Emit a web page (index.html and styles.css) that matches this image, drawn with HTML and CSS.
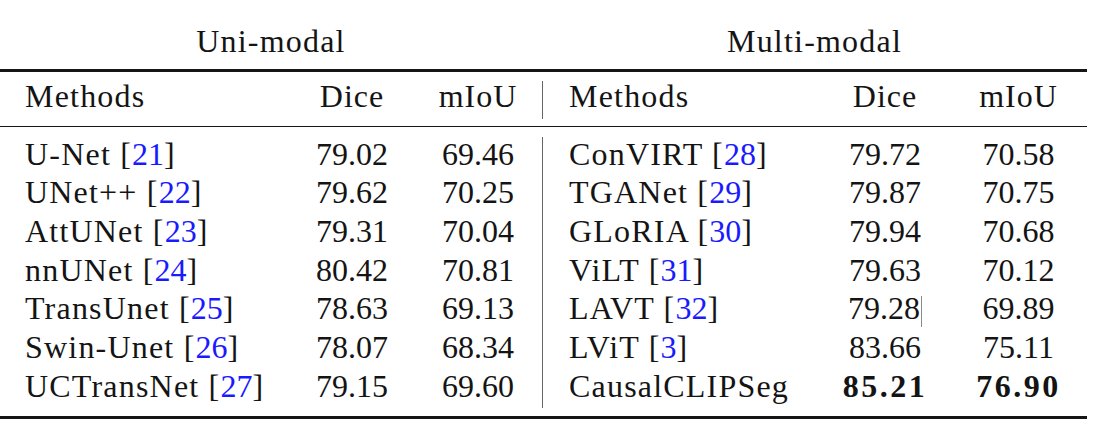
FILE: index.html
```html
<!DOCTYPE html>
<html lang="en">
<head>
<meta charset="utf-8">
<title>Comparison table</title>
<link rel="stylesheet" href="styles.css">
</head>
<body>
<div class="table">
  <div class="groups">
    <div class="group">Uni-modal</div>
    <div class="group">Multi-modal</div>
  </div>
  <div class="rule rule-top"></div>
  <div class="row head">
    <div class="name">Methods</div>
    <div class="num">Dice</div>
    <div class="num">mIoU</div>
    <div class="name sep">Methods</div>
    <div class="num">Dice</div>
    <div class="num">mIoU</div>
  </div>
  <div class="rule rule-mid"></div>
  <div class="body">
    <div class="row">
      <div class="name">U-Net [<span class="cite">21</span>]</div>
      <div class="num">79.02</div>
      <div class="num">69.46</div>
      <div class="name sep">ConVIRT [<span class="cite">28</span>]</div>
      <div class="num">79.72</div>
      <div class="num">70.58</div>
    </div>
    <div class="row">
      <div class="name">UNet++ [<span class="cite">22</span>]</div>
      <div class="num">79.62</div>
      <div class="num">70.25</div>
      <div class="name sep">TGANet [<span class="cite">29</span>]</div>
      <div class="num">79.87</div>
      <div class="num">70.75</div>
    </div>
    <div class="row">
      <div class="name">AttUNet [<span class="cite">23</span>]</div>
      <div class="num">79.31</div>
      <div class="num">70.04</div>
      <div class="name sep">GLoRIA [<span class="cite">30</span>]</div>
      <div class="num">79.94</div>
      <div class="num">70.68</div>
    </div>
    <div class="row">
      <div class="name">nnUNet [<span class="cite">24</span>]</div>
      <div class="num">80.42</div>
      <div class="num">70.81</div>
      <div class="name sep">ViLT [<span class="cite">31</span>]</div>
      <div class="num">79.63</div>
      <div class="num">70.12</div>
    </div>
    <div class="row">
      <div class="name">TransUnet [<span class="cite">25</span>]</div>
      <div class="num">78.63</div>
      <div class="num">69.13</div>
      <div class="name sep">LAVT [<span class="cite">32</span>]</div>
      <div class="num">79.28<span class="caret"></span></div>
      <div class="num">69.89</div>
    </div>
    <div class="row">
      <div class="name">Swin-Unet [<span class="cite">26</span>]</div>
      <div class="num">78.07</div>
      <div class="num">68.34</div>
      <div class="name sep">LViT [<span class="cite">3</span>]</div>
      <div class="num">83.66</div>
      <div class="num">75.11</div>
    </div>
    <div class="row">
      <div class="name">UCTransNet [<span class="cite">27</span>]</div>
      <div class="num">79.15</div>
      <div class="num">69.60</div>
      <div class="name sep">CausalCLIPSeg</div>
      <div class="num best">85.21</div>
      <div class="num best">76.90</div>
    </div>
  </div>
  <div class="rule rule-bottom"></div>
</div>
</body>
</html>
```

FILE: styles.css
```css
html, body {
  margin: 0;
  padding: 0;
  background: #ffffff;
}

body {
  font-family: "Liberation Serif", "Times New Roman", serif;
  font-size: 32px;
  color: #141414;
}

.table {
  width: 1087px;
}

.groups {
  display: grid;
  grid-template-columns: 542px 545px;
  height: 69px;
}

.group {
  text-align: center;
  line-height: 30px;
  padding-top: 26px;
  letter-spacing: 1.2px;
}

.rule {
  background: #161616;
}

.rule-top {
  height: 3px;
  margin-bottom: 9px;
}

.rule-mid {
  height: 1.5px;
  margin-top: 6.5px;
  margin-bottom: 10px;
}

.rule-bottom {
  height: 3px;
  margin-top: 8px;
}

.row {
  display: grid;
  grid-template-columns: 290px 124px 128px 278px 130px 137px;
  height: 38.7px;
  padding-top: 3.5px;
  line-height: 27.4px;
  box-sizing: border-box;
}

.row.head {
  height: 38px;
  padding-top: 1px;
  line-height: 29.8px;
}

.name {
  padding-left: 25px;
  letter-spacing: 1.2px;
  white-space: nowrap;
}

.name.sep {
  border-left: 1.5px solid #666666;
  padding-left: 26px;
  margin-top: -3.5px;
  padding-top: 3.5px;
}

.head .name.sep {
  margin-top: -1px;
  padding-top: 1px;
}

.head .num {
  letter-spacing: 1px;
}

.num {
  text-align: center;
  white-space: nowrap;
}

.best {
  font-weight: 700;
  letter-spacing: 2.5px;
}

.cite {
  color: #1a1aff;
  letter-spacing: 0;
}

.caret {
  display: inline-block;
  width: 1px;
  height: 31px;
  margin-left: 1px;
  background: #8a8a8a;
  vertical-align: -8px;
}
```
